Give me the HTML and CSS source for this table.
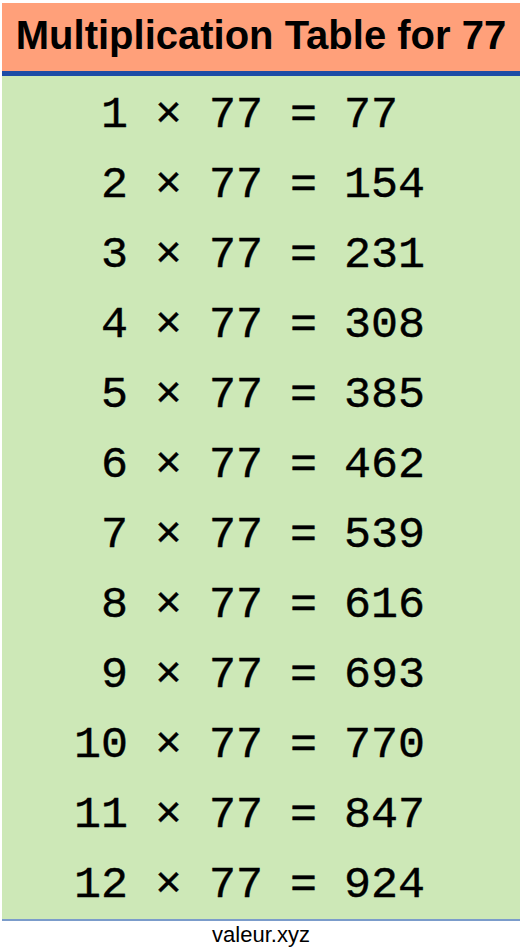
FILE: index.html
```html
<!DOCTYPE html>
<html>
<head>
<meta charset="utf-8">
<link rel="stylesheet" href="styles.css">
</head>
<body>
<div class="sheet">
  <div class="header"><h1 class="title">Multiplication Table for 77</h1></div>
  <div class="table">
    <div class="row"> 1 × 77 = 77</div>
    <div class="row"> 2 × 77 = 154</div>
    <div class="row"> 3 × 77 = 231</div>
    <div class="row"> 4 × 77 = 308</div>
    <div class="row"> 5 × 77 = 385</div>
    <div class="row"> 6 × 77 = 462</div>
    <div class="row"> 7 × 77 = 539</div>
    <div class="row"> 8 × 77 = 616</div>
    <div class="row"> 9 × 77 = 693</div>
    <div class="row">10 × 77 = 770</div>
    <div class="row">11 × 77 = 847</div>
    <div class="row">12 × 77 = 924</div>
  </div>
  <div class="footer">valeur.xyz</div>
</div>
</body>
</html>
```
FILE: styles.css
```css
html, body {
  background: #ffffff;
}
body {
  margin: 3px 0 0 2px;
}
.sheet {
  display: flex;
  flex-direction: column;
}
.header {
  height: 58px;
  padding-top: 10px;
  background: #ffa07a;
  border-bottom: 5px solid #1d4ca6;
  text-align: center;
}
.title {
  margin: 0;
  font-family: "Liberation Sans", Arial, sans-serif;
  font-weight: bold;
  font-size: 40px;
  line-height: 45px;
  color: #000;
}
.table {
  background: #cde8b7;
  padding: 2px 0 1px 72px;
  border-bottom: 2px solid #7b9ccb;
}
.row {
  height: 70px;
  line-height: 76px;
  white-space: pre;
  font-family: "Liberation Mono", "Courier New", monospace;
  font-weight: normal;
  font-size: 45px;
  -webkit-text-stroke: 0.4px #000;
  color: #000;
}
.footer {
  text-align: center;
  font-family: "Liberation Sans", Arial, sans-serif;
  font-size: 22px;
  line-height: 28px;
  color: #000;
}
```
